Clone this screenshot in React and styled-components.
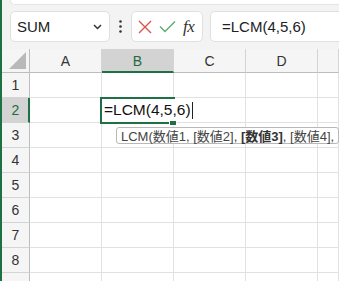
import React from "react";
import styled, { createGlobalStyle } from "styled-components";

const Global = createGlobalStyle`
  html, body { margin: 0; padding: 0; }
  body { font-family: "Liberation Sans", "Noto Sans CJK JP", sans-serif; background: #f3f3f3; }
`;

const GREEN = "#1e7145";

const Window = styled.div`
  width: 100vw;
  height: 100vh;
  box-sizing: border-box;
  border-left: 2px solid ${GREEN};
  background: #f3f3f3;
  overflow: hidden;
  display: flex;
  flex-direction: column;
  & > * { flex: none; }
`;

const RibbonEdge = styled.div`
  height: 4px;
  margin-left: 8px;
  background: #fff;
  border-left: 1px solid #e4e4e4;
  border-bottom: 1px solid #e4e4e4;
  border-bottom-left-radius: 6px;
`;

const FormulaBar = styled.div`
  display: flex;
  align-items: stretch;
  height: 31px;
  margin-top: 6px;
  padding-left: 8px;
`;

const Box = styled.div`
  box-sizing: border-box;
  background: #fff;
  border: 1px solid #e0e0e0;
  border-radius: 5px;
  display: flex;
  align-items: center;
`;

const NameBox = styled(Box)`
  width: 100px;
  padding: 0 7px 0 6px;
  justify-content: space-between;
  font-size: 15px;
  color: #222;
`;

const Dots = styled.div`
  width: 21px;
  display: flex;
  align-items: center;
  justify-content: center;
`;

const ButtonsBox = styled(Box)`
  width: 72px;
  justify-content: space-around;
  padding: 0 2px;
`;

const Fx = styled.span`
  font-family: "Liberation Serif", "DejaVu Serif", serif;
  font-style: italic;
  font-size: 17px;
  color: #333;
  letter-spacing: -0.5px;
  padding-right: 2px;
`;

const FormulaInput = styled(Box)`
  flex: 1;
  margin-left: 7px;
  border-right: none;
  border-top-right-radius: 0;
  border-bottom-right-radius: 0;
  padding-left: 11px;
  font-size: 15px;
  color: #222;
`;

const Grid = styled.div`
  margin-top: 7px;
  display: grid;
  grid-template-columns: 28px repeat(4, 72px) 1fr;
  grid-template-rows: 24px repeat(9, 25px);
  background: #fff;
`;

const Corner = styled.div`
  box-sizing: border-box;
  background: #f5f5f5;
  border-right: 1px solid #bdbdbd;
  border-bottom: 1px solid #bdbdbd;
  display: flex;
  align-items: flex-end;
  justify-content: flex-end;
  padding: 0 3px 3px 0;
`;

const Triangle = styled.div`
  width: 0;
  height: 0;
  border-left: 17px solid transparent;
  border-bottom: 17px solid #b9b9b9;
`;

const ColHead = styled.div`
  box-sizing: border-box;
  background: ${(p) => (p.$sel ? "#d3d3d3" : "#f5f5f5")};
  color: ${(p) => (p.$sel ? "#1c6b40" : "#333")};
  border-right: 1px solid #d4d4d4;
  border-bottom: ${(p) => (p.$sel ? `2px solid ${GREEN}` : "1px solid #bdbdbd")};
  display: flex;
  align-items: center;
  justify-content: center;
  font-size: 14px;
  padding-top: ${(p) => (p.$sel ? "1px" : "0")};
`;

const RowHead = styled.div`
  box-sizing: border-box;
  background: ${(p) => (p.$sel ? "#d3d3d3" : "#f5f5f5")};
  color: ${(p) => (p.$sel ? "#1c6b40" : "#333")};
  border-right: ${(p) => (p.$sel ? `2px solid ${GREEN}` : "1px solid #bdbdbd")};
  border-bottom: 1px solid #d4d4d4;
  display: flex;
  align-items: center;
  justify-content: center;
  font-size: 14px;
  padding-left: ${(p) => (p.$sel ? "1px" : "0")};
`;

const Cell = styled.div`
  box-sizing: border-box;
  background: #fff;
  border-right: 1px solid #e1e1e1;
  border-bottom: 1px solid #e1e1e1;
  position: ${(p) => (p.$active ? "relative" : "static")};
  z-index: ${(p) => (p.$active ? 2 : "auto")};
`;

const Selection = styled.div`
  position: absolute;
  left: -2px;
  top: -1px;
  width: 75px;
  height: 27px;
  box-sizing: border-box;
  border: 2px solid ${GREEN};
`;

const FillHandle = styled.div`
  position: absolute;
  right: -4px;
  bottom: -4px;
  width: 6px;
  height: 6px;
  background: ${GREEN};
  border: 1px solid #fff;
`;

const Editing = styled.div`
  position: absolute;
  left: 0;
  top: 1px;
  height: 22px;
  padding: 0 2px;
  background: #fff;
  display: flex;
  align-items: center;
  white-space: nowrap;
  font-size: 15.5px;
  color: #111;
`;

const Caret = styled.span`
  display: inline-block;
  width: 1px;
  height: 17px;
  background: #222;
  margin-left: 1px;
`;

const Tip = styled.div`
  position: absolute;
  left: 14px;
  top: 29px;
  height: 17px;
  box-sizing: border-box;
  padding: 0 4px;
  display: flex;
  align-items: center;
  white-space: nowrap;
  background: #fff;
  border: 1px solid #b8b8b8;
  border-radius: 3px;
  font-size: 13px;
  color: #444;
`;

const Bold = styled.b`
  font-weight: bold;
  color: #333;
`;

const cols = ["A", "B", "C", "D", ""];

export default function App() {
  const rows = [1, 2, 3, 4, 5, 6, 7, 8, 9];
  return (
    <>
      <Global />
      <Window>
        <RibbonEdge />
        <FormulaBar>
          <NameBox>
            <span>SUM</span>
            <svg width="9" height="6" viewBox="0 0 9 6">
              <path d="M1 1 L4.5 4.5 L8 1" fill="none" stroke="#333" strokeWidth="1.5" />
            </svg>
          </NameBox>
          <Dots>
            <svg width="3" height="13" viewBox="0 0 3 13">
              <circle cx="1.5" cy="1.5" r="1.3" fill="#333" />
              <circle cx="1.5" cy="6.5" r="1.3" fill="#333" />
              <circle cx="1.5" cy="11.5" r="1.3" fill="#333" />
            </svg>
          </Dots>
          <ButtonsBox>
            <svg width="14" height="14" viewBox="0 0 14 14">
              <path d="M1 1 L13 13 M13 1 L1 13" stroke="#d9534f" strokeWidth="1.4" fill="none" />
            </svg>
            <svg width="17" height="13" viewBox="0 0 17 13">
              <path d="M1 6.5 L6 11.5 L16 1.5" stroke="#5caa6c" strokeWidth="1.4" fill="none" />
            </svg>
            <Fx>fx</Fx>
          </ButtonsBox>
          <FormulaInput>=LCM(4,5,6)</FormulaInput>
        </FormulaBar>
        <Grid>
          <Corner>
            <Triangle />
          </Corner>
          {cols.map((c, i) => (
            <ColHead key={"h" + i} $sel={c === "B"}>
              {c}
            </ColHead>
          ))}
          {rows.map((r) => (
            <React.Fragment key={r}>
              <RowHead $sel={r === 2}>{r < 9 ? r : null}</RowHead>
              {cols.map((c, i) => {
                const active = r === 2 && c === "B";
                return (
                  <Cell key={r + "-" + i} $active={active}>
                    {active && (
                      <>
                        <Selection>
                          <FillHandle />
                        </Selection>
                        <Editing>
                          =LCM(4,5,6)
                          <Caret />
                        </Editing>
                        <Tip>
                          LCM(数値1, [数値2],&nbsp;<Bold>[数値3]</Bold>, [数値4],
                        </Tip>
                      </>
                    )}
                  </Cell>
                );
              })}
            </React.Fragment>
          ))}
        </Grid>
      </Window>
    </>
  );
}
